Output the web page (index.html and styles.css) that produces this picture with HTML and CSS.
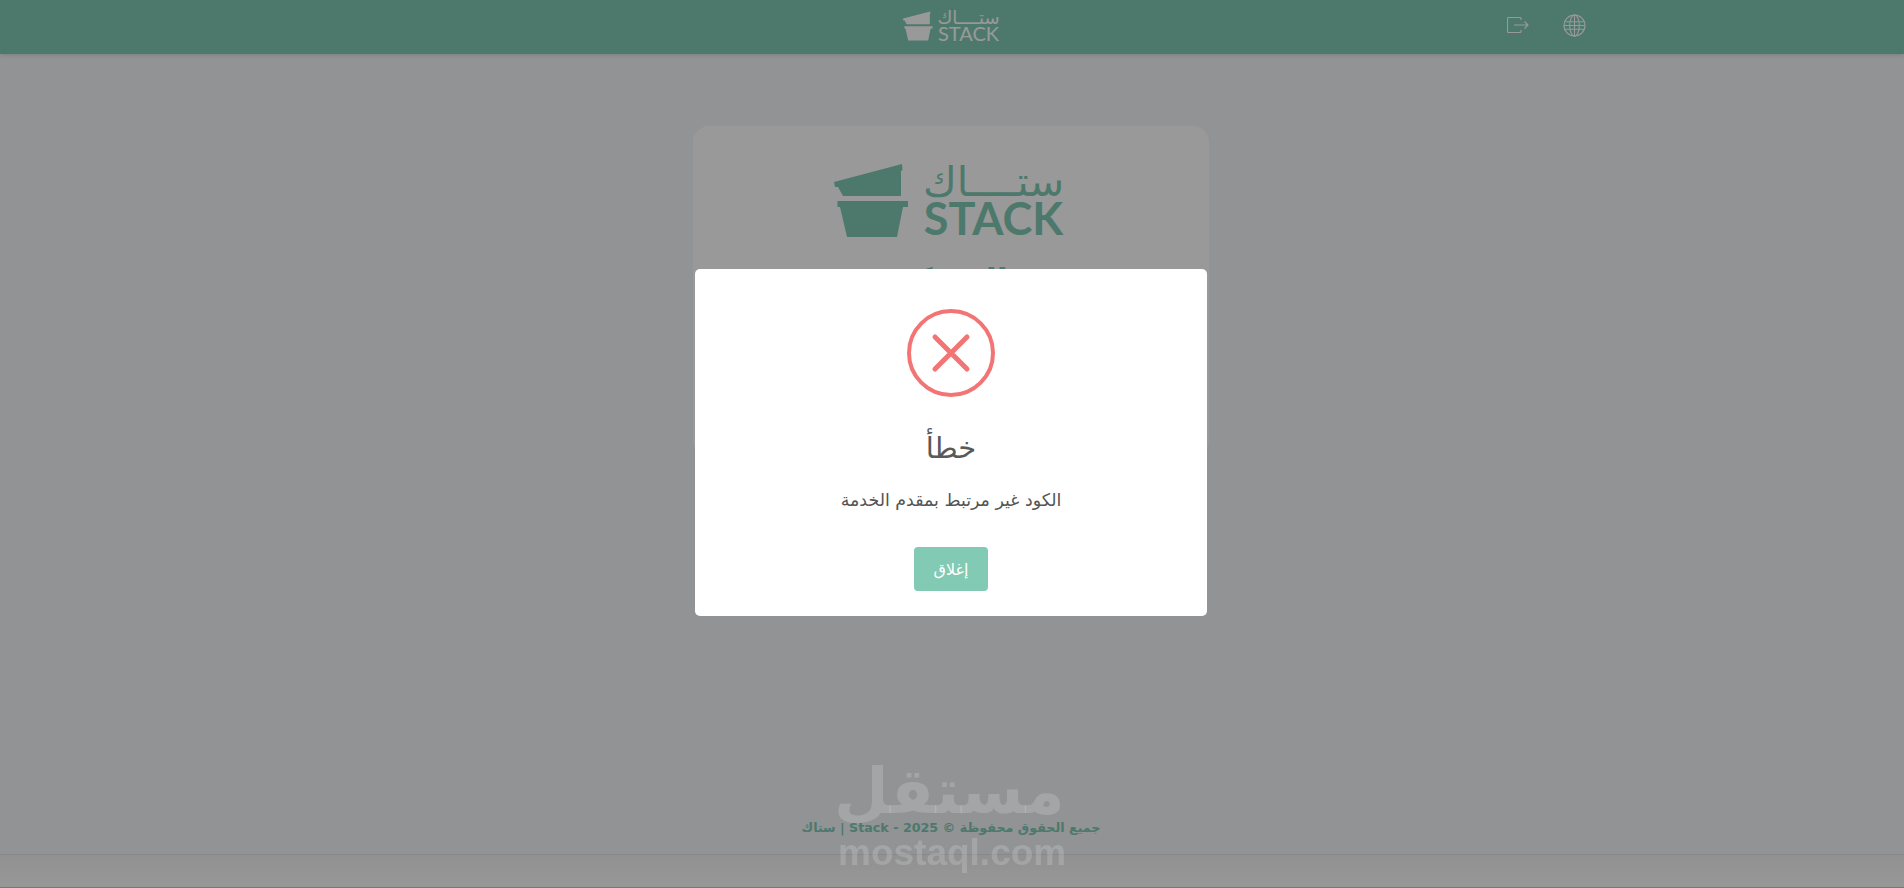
FILE: index.html
```html
<!DOCTYPE html>
<html lang="ar" dir="rtl">
<head>
    <meta charset="UTF-8">
    <meta name="viewport" content="width=device-width, initial-scale=1.0">
    <title>ستاك</title>
    <link rel="stylesheet" href="styles.css">
</head>
<body>
    <div class="page">
        <header class="topbar">
            <div class="topbar-inner">
                <div class="topbar-icons">
                    <svg class="icon-globe" viewBox="0 0 24 24" fill="none" stroke="currentColor" stroke-width="1.1">
                        <circle cx="12" cy="12" r="11"/>
                        <ellipse cx="12" cy="12" rx="5" ry="11"/>
                        <path d="M12 1v22M1.6 8h20.8M1.6 16h20.8M1 12h22"/>
                    </svg>
                    <svg class="icon-logout" viewBox="0 0 22 16" fill="none" stroke="currentColor" stroke-width="1.1">
                        <path d="M14 3V1.5a1 1 0 0 0-1-1H1.5a1 1 0 0 0-1 1v13a1 1 0 0 0 1 1H13a1 1 0 0 0 1-1V13"/>
                        <path d="M7 8h14M17.5 4.5 21 8l-3.500 3.500"/>
                    </svg>
                </div>
                <div class="logo logo-small">
                    <div class="logo-words">
                        <span class="logo-ar">ستــــاك</span>
                        <span class="logo-en">STACK</span>
                    </div>
                    <svg class="logo-mark" viewBox="0 0 75 73" fill="currentColor">
                        <path d="M0 18 68 0l.5 6-1.500 1v25H9L4 23H1z"/>
                        <path d="M3.500 37H74v6h-5l-6 30H13L6 43H3.500z"/>
                    </svg>
                </div>
                <div></div>
            </div>
        </header>

        <main class="content">
            <section class="login-card">
                <div class="logo logo-large">
                    <div class="logo-words">
                        <span class="logo-ar">ستــــاك</span>
                        <span class="logo-en">STACK</span>
                    </div>
                    <svg class="logo-mark" viewBox="0 0 75 73" fill="currentColor">
                        <path d="M0 18 68 0l.5 6-1.500 1v25H9L4 23H1z"/>
                        <path d="M3.500 37H74v6h-5l-6 30H13L6 43H3.500z"/>
                    </svg>
                </div>
                <h2 class="login-title">الشركة</h2>
            </section>
        </main>

        <p class="copyright">جميع الحقوق محفوظة © 2025 - Stack | ستاك</p>
        <footer class="bottom-band"></footer>
    </div>

    <div class="overlay">
        <div class="modal">
            <svg class="modal-icon" viewBox="0 0 88 88" fill="none" stroke="#f27474" stroke-linecap="round">
                <circle cx="44" cy="44" r="42" stroke-width="4"/>
                <path d="M28 28l32 32M60 28 28 60" stroke-width="5"/>
            </svg>
            <h2 class="modal-title">خطأ</h2>
            <p class="modal-text">الكود غير مرتبط بمقدم الخدمة</p>
            <button class="modal-btn">إغلاق</button>
        </div>
    </div>

    <div class="watermark">
        <span class="watermark-ar">مستقل</span>
        <span class="watermark-en">mostaql.com</span>
    </div>
</body>
</html>
```

FILE: styles.css
```css
* {
    box-sizing: border-box;
}

body {
    margin: 0;
    font-family: "DejaVu Sans", "Noto Sans", sans-serif;
    background: #f3f5f8;
    color: #545454;
    overflow: hidden;
}

.page {
    height: 888px;
    display: flex;
    flex-direction: column;
}

.topbar {
    height: 54px;
    background: #80cab4;
    color: #fff;
    box-shadow: 0 1px 4px rgba(0, 0, 0, 0.15);
}

.topbar-inner {
    width: 1270px;
    height: 100%;
    margin-right: 318px;
    display: grid;
    grid-template-columns: 1fr auto 1fr;
    align-items: center;
}

.topbar-icons {
    display: flex;
    align-items: center;
    gap: 34px;
    margin-top: -4px;
}

.icon-globe {
    width: 23px;
    height: 23px;
}

.icon-logout {
    width: 22px;
    height: 16px;
}

/* logo */
.logo {
    display: flex;
    align-items: flex-end;
    direction: rtl;
}

.logo-words {
    display: flex;
    flex-direction: column;
    align-items: stretch;
    text-align: center;
}

.logo-ar {
    font-weight: normal;
    white-space: nowrap;
}

.logo-en {
    direction: ltr;
    font-family: "Lato", sans-serif;
    white-space: nowrap;
}

.logo-mark {
    display: block;
}

.logo-small {
    gap: 5px;
    color: #fff;
    margin-top: -5px;
}

.logo-small .logo-mark {
    width: 30px;
    height: 30px;
}

.logo-small .logo-ar {
    font-size: 18px;
    line-height: 17px;
}

.logo-small .logo-en {
    font-size: 20px;
    line-height: 15px;
}

.logo-large {
    gap: 14px;
    color: #80cab4;
    height: 73px;
    margin-right: 4px;
}

.logo-large .logo-mark {
    width: 75px;
    height: 73px;
}

.logo-large .logo-ar {
    font-size: 41px;
    line-height: 36px;
}

.logo-large .logo-en {
    font-size: 45px;
    line-height: 37px;
    font-weight: 700;
}

/* behind the modal */
.content {
    flex: 1;
    display: flex;
    justify-content: center;
    align-items: flex-start;
    padding: 72px 2px 0 0;
}

.login-card {
    width: 516px;
    height: 331px;
    padding-top: 38px;
    background: #fff;
    border-radius: 16px;
    display: flex;
    flex-direction: column;
    align-items: center;
}

.login-title {
    margin: 24px 0 0;
    font-size: 32px;
    color: #80cab4;
}

.copyright {
    margin: 0 0 18px;
    padding-right: 2px;
    text-align: center;
    font-size: 12.7px;
    font-weight: bold;
    line-height: 16px;
    color: #80cab4;
}

.bottom-band {
    height: 34px;
    border-top: 1px solid #e4e4e4;
    border-bottom: 1px solid #c8c8c8;
    background: linear-gradient(#f2f2f2, #fdfdfd);
}

/* error dialog */
.overlay {
    position: fixed;
    top: 0;
    right: 0;
    bottom: 0;
    left: 0;
    background: rgba(0, 0, 0, 0.4);
    display: flex;
    justify-content: center;
    align-items: flex-start;
    padding-top: 269px;
    padding-right: 2px;
}

.modal {
    width: 512px;
    height: 347px;
    padding-top: 40px;
    background: #fff;
    border-radius: 5px;
    text-align: center;
    display: flex;
    flex-direction: column;
    align-items: center;
}

.modal-icon {
    width: 88px;
    height: 88px;
    display: block;
}

.modal-title {
    margin: 30px 0 0;
    font-size: 29px;
    line-height: 42px;
    font-weight: normal;
    color: #595959;
}

.modal-text {
    margin: 18px 0 0;
    font-size: 17.4px;
    line-height: 26px;
    color: #545454;
}

.modal-btn {
    width: 74px;
    height: 44px;
    margin-top: 34px;
    border: 0;
    border-radius: 4px;
    background: #82cab4;
    color: #fff;
    font-family: inherit;
    font-size: 16px;
}

/* site stamp over everything */
.watermark {
    position: absolute;
    left: 834px;
    top: 752px;
    width: 228px;
    text-align: center;
    color: rgba(255, 255, 255, 0.17);
    font-weight: bold;
    direction: ltr;
}

.watermark-ar {
    display: block;
    font-size: 63px;
    line-height: 80px;
    white-space: nowrap;
}

.watermark-en {
    display: block;
    margin-left: 4px;
    font-family: "Liberation Sans", sans-serif;
    font-size: 37px;
    line-height: 42px;
    white-space: nowrap;
}
```
